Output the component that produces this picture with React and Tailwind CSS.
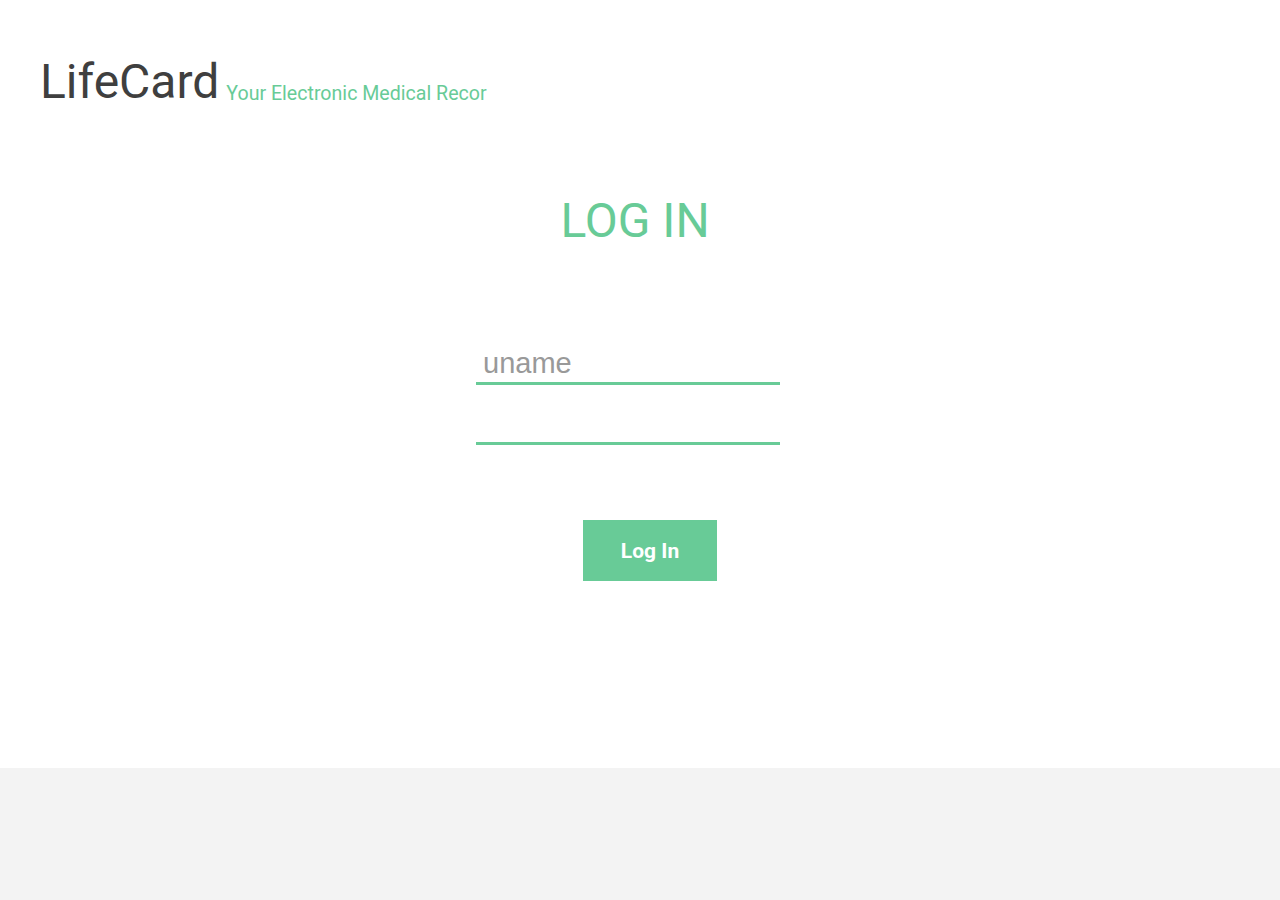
export default function App() {
  return (
    <div className="min-h-[900px] flex flex-col bg-white" style={{ fontFamily: "Roboto, sans-serif" }}>
      <div className="h-[768px] flex flex-col">
        <header className="pt-[50px] pl-[40px] flex items-baseline gap-[7px]">
          <h1 className="text-[48px] leading-[64px] text-[#3f3f3f] font-normal">LifeCard</h1>
          <span className="translate-y-[2px] text-[19.6px] text-[#68cb97]">Your Electronic Medical Recor</span>
        </header>
        <h2 className="mt-[77px] text-center text-[48px] leading-[60px] text-[#68cb97] ml-[-10px]">LOG IN</h2>
        <form className="flex flex-col mt-[90px] ml-[476px] w-[304px]">
          <input
            className="h-[44px] border-b-[3px] border-[#68cb97] px-[7px] pt-[3px] text-[29px] text-[#555] placeholder-[#999] outline-none"
            style={{ fontFamily: "'Liberation Sans', Arial, sans-serif" }}
            placeholder="uname"
            type="text"
          />
          <input
            className="mt-[16px] h-[44px] border-b-[3px] border-[#68cb97] px-[7px] text-[26px] outline-none"
            type="password"
          />
          <button
            type="button"
            className="mt-[75px] ml-[107px] w-[134px] h-[61px] pt-[3px] bg-[#68cb97] text-white font-bold text-[21px]"
          >
            Log In
          </button>
        </form>
      </div>
      <footer className="h-[132px] bg-[#f3f3f3]" />
    </div>
  );
}
